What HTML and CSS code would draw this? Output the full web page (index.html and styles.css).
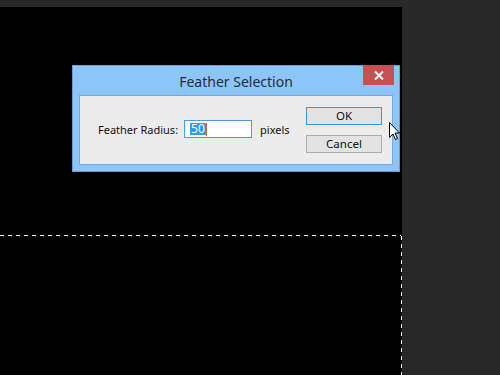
FILE: index.html
```html
<!DOCTYPE html>
<html>
<head>
<meta charset="utf-8">
<link rel="stylesheet" href="styles.css">
</head>
<body>
<div class="app">
  <div class="topbar"></div>
  <div class="workspace">
    <div class="canvas">
      <svg class="marquee" width="402" height="368" viewBox="0 0 402 368">
        <line x1="0" y1="228.5" x2="401" y2="228.5" stroke="#fff" stroke-width="1" stroke-dasharray="4 4"/>
        <line x1="401.5" y1="229" x2="401.5" y2="368" stroke="#fff" stroke-width="1" stroke-dasharray="4 4"/>
      </svg>
      <div class="dialog">
        <div class="titlebar">
          <span class="title">Feather Selection</span>
          <div class="close">
            <svg width="10" height="9" viewBox="0 0 10 9"><path d="M1 0.5 L9 8.5 M9 0.5 L1 8.5" stroke="#fff" stroke-width="2"/></svg>
          </div>
        </div>
        <div class="content">
          <div class="field">
            <span class="label">Feather Radius:</span>
            <div class="input"><span class="sel">50</span><span class="caret"></span></div>
            <span class="unit">pixels</span>
          </div>
          <div class="buttons">
            <div class="btn default">OK</div>
            <div class="btn">Cancel</div>
          </div>
        </div>
      </div>
      <svg class="cursor" width="12" height="19" viewBox="0 0 12 19">
        <path d="M0.5 0.5 L0.5 15.5 L4 12 L6.5 17.5 L8.5 16.5 L6 11 L10.5 11 Z" fill="#fff" stroke="#000" stroke-width="1"/>
      </svg>
    </div>
    <div class="panel"></div>
  </div>
</div>
</body>
</html>
```
FILE: styles.css
```css
html, body {
  margin: 0;
  padding: 0;
  background: #282828;
  width: 500px;
  height: 375px;
  overflow: hidden;
}
.app {
  display: flex;
  flex-direction: column;
  width: 500px;
  height: 375px;
}
.topbar {
  height: 7px;
  background: #282828;
}
.workspace {
  flex: 1;
  display: flex;
}
.canvas {
  position: relative;
  width: 402px;
  background: #000;
}
.panel {
  flex: 1;
  background: #282828;
}
.marquee {
  position: absolute;
  left: 0;
  top: 0;
}
.dialog {
  position: absolute;
  left: 72px;
  top: 58px;
  width: 326px;
  height: 105px;
  border: 1px solid #6a9dd3;
  background: #8cc5f8;
  display: flex;
  flex-direction: column;
  font-family: "Noto Sans", "Open Sans", sans-serif;
}
.titlebar {
  position: relative;
  height: 29px;
  display: flex;
  justify-content: center;
  align-items: center;
}
.title {
  font-size: 14px;
  color: #2b2b3a;
  padding-top: 1px;
}
.close {
  position: absolute;
  top: -1px;
  right: 5px;
  width: 31px;
  height: 20px;
  background: #c75050;
  display: flex;
  align-items: center;
  justify-content: center;
}
.content {
  margin: 0 6px;
  height: 68px;
  border: 1px solid #79a8d8;
  background: #ececec;
  display: flex;
  align-items: flex-start;
  font-size: 11px;
  color: #111;
}
.field {
  display: flex;
  align-items: center;
  margin-left: 18px;
  margin-top: 24px;
}
.label {
  margin-right: 6px;
}
.input {
  width: 61px;
  height: 16px;
  border: 1px solid #4f98e2;
  background: #fff;
  display: flex;
  align-items: center;
  padding-left: 5px;
  margin-right: 8px;
  font-size: 12px;
}
.sel {
  background: #3399ff;
  color: #fff;
  height: 12px;
  line-height: 12px;
  padding: 0 1px;
}
.caret {
  width: 1px;
  height: 13px;
  background: #c86a1e;
}
.buttons {
  margin-left: auto;
  margin-right: 10px;
  margin-top: 11px;
  display: flex;
  flex-direction: column;
  gap: 10px;
}
.btn {
  width: 74px;
  height: 16px;
  border: 1px solid #acacac;
  background: #e3e3e3;
  text-align: center;
  line-height: 16px;
  font-size: 11.5px;
  color: #111;
}
.btn.default {
  border-color: #3c95e4;
}
.cursor {
  position: absolute;
  left: 389px;
  top: 115px;
}
```
